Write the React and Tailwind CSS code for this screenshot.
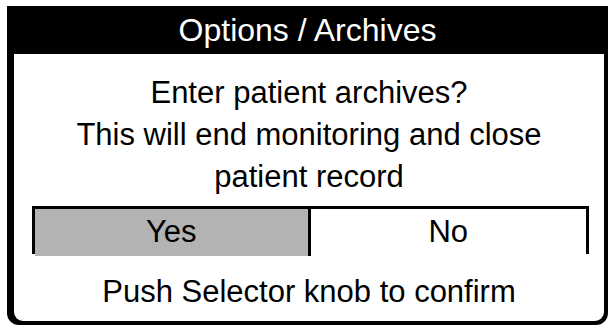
import React from "react";

const App = () => {
  return (
    <div className="w-[608px] h-[328px] bg-white overflow-hidden pt-[6px] pl-[7px]" style={{ fontFamily: '"Liberation Sans", Arial, sans-serif' }}>
      {/* Dialog frame */}
      <div className="w-[601px] h-[319px] bg-black rounded-b-[12px] flex flex-col pl-[7px] pr-[4px] pb-[4px]">
        {/* Title */}
        <div className="h-[48px] flex items-center justify-center text-white text-[32px] leading-none -ml-[7px] -mr-[4px]">
          Options / Archives
        </div>

        {/* Body */}
        <div className="flex-1 bg-white rounded-b-[9px] flex flex-col text-black text-[31px]">
          <div className="pt-[18px] text-center leading-[42px]">
            <p>Enter patient archives?</p>
            <p>This will end monitoring and close</p>
            <p>patient record</p>
          </div>

          <div className="mt-[8px] ml-[18px] mr-[15px] h-[48px] grid grid-cols-2 border-[3px] border-black">
            <div className="bg-[#b3b3b3] border-r-[3px] border-black flex items-center justify-center">
              Yes
            </div>
            <div className="bg-white flex items-center justify-center">No</div>
          </div>

          <div className="mt-[17px] text-center leading-[42px]">
            Push Selector knob to confirm
          </div>
        </div>
      </div>
    </div>
  );
};

export default App;
